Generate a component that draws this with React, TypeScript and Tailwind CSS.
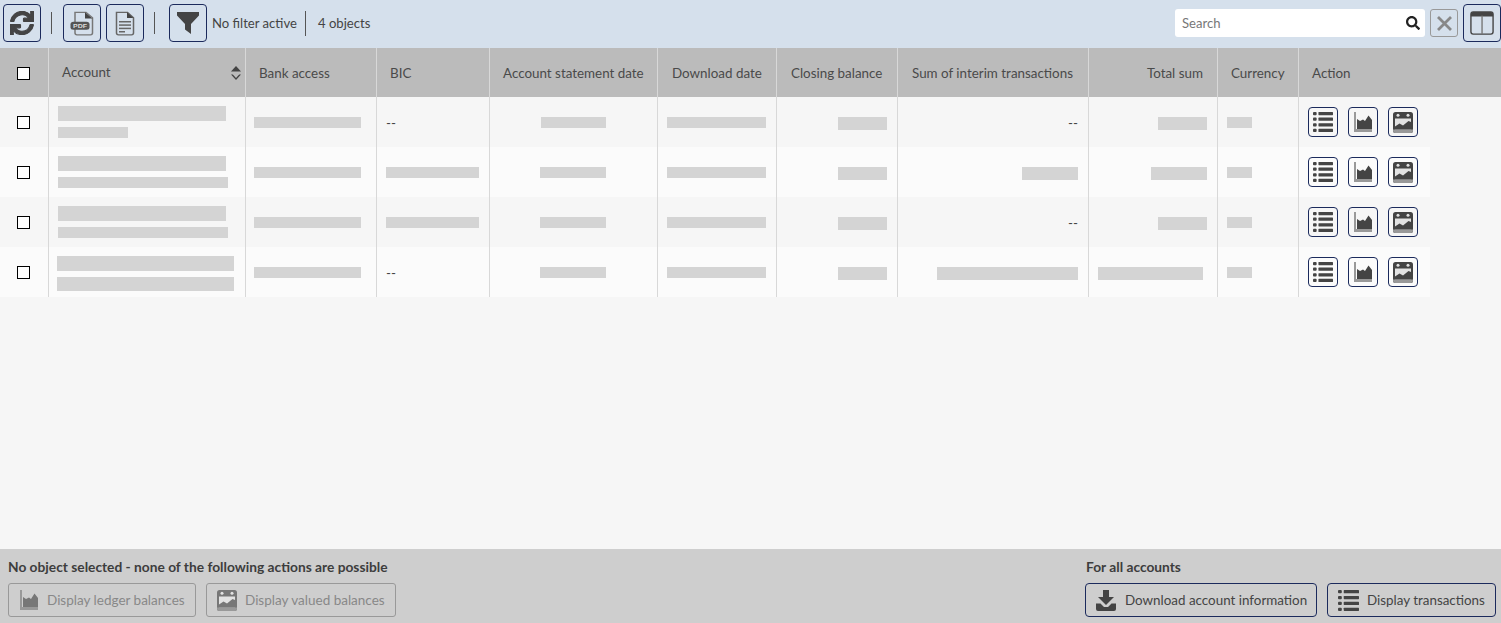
import { FaSearch, FaSync } from "react-icons/fa";

const navyBtn = "flex items-center justify-center rounded-[4px] border border-[#1b2a5c]";

function ListIcon({ size }: { size: number }) {
  return (
    <svg width={size} height={size} viewBox="1 3 22 20" preserveAspectRatio="none" fill="#444">
      <rect x="1" y="3" width="4" height="3.2" rx="1" />
      <rect x="1" y="8.600" width="4" height="3.200" rx="1" />
      <rect x="1" y="14.200" width="4" height="3.200" rx="1" />
      <rect x="1" y="19.800" width="4" height="3.200" rx="1" />
      <rect x="7" y="3" width="16" height="3.200" rx="0.6" />
      <rect x="7" y="8.600" width="16" height="3.200" rx="0.6" />
      <rect x="7" y="14.200" width="16" height="3.200" rx="0.6" />
      <rect x="7" y="19.800" width="16" height="3.200" rx="0.6" />
    </svg>
  );
}

function LedgerIcon({ color = "#444" }: { color?: string }) {
  return (
    <svg width="18" height="20" viewBox="0 0 18 20">
      <path d="M0 0h2v17h16v3H0z" fill="#999" />
      <path d="M3 7l3 2 3-1.500 2 1.500 3.500-5.500L18 8v9H3z" fill={color} />
    </svg>
  );
}

function ValuedIcon({ color = "#444" }: { color?: string }) {
  return (
    <svg width="20" height="21" viewBox="0 0 20 21">
      <rect x="0" y="0" width="20" height="21" rx="2.500" fill={color} />
      <rect x="2" y="6.500" width="16" height="11" fill="#e2e2e2" />
      <circle cx="5" cy="3.300" r="1.500" fill="#e2e2e2" />
      <circle cx="15" cy="3.300" r="1.500" fill="#e2e2e2" />
      <path d="M2 17.500v-3l4.500-3 3.500 2 5.500-4.500 2.500 1v7.500z" fill={color} />
      <path d="M0 17.500h20v1a2.500 2.500 0 0 1-2.500 2.500h-15a2.500 2.500 0 0 1-2.500-2.500z" fill="#999" />
    </svg>
  );
}

function PdfIcon() {
  return (
    <svg width="24" height="25" viewBox="0 0 24 30" preserveAspectRatio="none">
      <path d="M5 1.500h11l6.500 6.500v18.500a2 2 0 0 1-2 2H7a2 2 0 0 1-2-2z" fill="none" stroke="#777" strokeWidth="1.500" />
      <path d="M15 1.500v7.500h7.500z" fill="#444" />
      <rect x="0.500" y="13" width="19" height="9.500" rx="3" fill="#555" />
      <text x="10" y="20.500" textAnchor="middle" fontSize="7" fontWeight="700" fill="#ddd" fontFamily="Liberation Sans, sans-serif">PDF</text>
    </svg>
  );
}

function DocIcon() {
  return (
    <svg width="20" height="25" viewBox="0 0 20 30" preserveAspectRatio="none">
      <path d="M1.500 1.500h11l6 6.500v18.500a2 2 0 0 1-2 2h-13a2 2 0 0 1-2-2z" fill="none" stroke="#666" strokeWidth="1.500" />
      <path d="M12 1.500v7h6.500z" fill="#444" />
      <rect x="4" y="12" width="12" height="1.800" fill="#666" />
      <rect x="4" y="16" width="12" height="1.800" fill="#666" />
      <rect x="4" y="20" width="12" height="1.800" fill="#666" />
      <rect x="4" y="24" width="6" height="1.800" fill="#666" />
    </svg>
  );
}

function FilterIcon() {
  return (
    <svg width="22" height="22" viewBox="0 0 22 22" fill="#444">
      <path d="M0 0h22v3.500l-8 8.500v10l-6-4.500v-5.500L0 3.500z" />
    </svg>
  );
}

function CloseIcon() {
  return (
    <svg width="15" height="15" viewBox="0 0 15 15" stroke="#888" strokeWidth="2.800" fill="none">
      <path d="M1 1l13 13M14 1L1 14" />
    </svg>
  );
}

function LayoutIcon() {
  return (
    <svg width="24" height="24" viewBox="0 0 26 26">
      <rect x="1" y="1" width="24" height="24" rx="2.500" fill="none" stroke="#444" strokeWidth="1.500" />
      <path d="M1 3.500a2.500 2.500 0 0 1 2.500-2.500h19a2.500 2.500 0 0 1 2.500 2.500v2.500H1z" fill="#444" />
      <rect x="12.300" y="5" width="1.500" height="20" fill="#777" />
    </svg>
  );
}

function DownloadIcon() {
  return (
    <svg width="20" height="21" viewBox="0 0 20 21" fill="#444">
      <path d="M7 0h6v7h5l-8 8-8-8h5z" />
      <path d="M0 13.500h4.500L8 17h4l3.500-3.500H20V19a2 2 0 0 1-2 2H2a2 2 0 0 1-2-2z" />
    </svg>
  );
}

function Bar({ w, h = 11, className = "" }: { w: number; h?: number; className?: string }) {
  return <div className={`bg-[#d4d4d4] ${className}`} style={{ width: w, height: h }} />;
}

function Cell({ w, className = "", children }: { w: string; className?: string; children: React.ReactNode }) {
  return <div className={`${w} flex h-full shrink-0 items-center border-l border-[#d8d8d8] ${className}`}>{children}</div>;
}

function Checkbox() {
  return <div className="h-[13px] w-[13px] border border-black bg-white" />;
}

function Dash() {
  return <span className="pt-[2px] text-[#444]">--</span>;
}

type Row = {
  acc1: number;
  acc2: number;
  acc2h: number;
  accLeft: string;
  bic: number;
  date: number;
  sum: number;
  total: number;
  totalPad: string;
  bg: string;
};

const rows: Row[] = [
  { acc1: 168, acc2: 70, acc2h: 11, accLeft: "pl-[9px]", bic: 0, date: 65, sum: 0, total: 49, totalPad: "pr-[10px]", bg: "bg-[#f6f6f6]" },
  { acc1: 168, acc2: 170, acc2h: 11, accLeft: "pl-[9px]", bic: 93, date: 66, sum: 56, total: 56, totalPad: "pr-[10px]", bg: "bg-[#fbfbfb]" },
  { acc1: 168, acc2: 170, acc2h: 11, accLeft: "pl-[9px]", bic: 93, date: 66, sum: 0, total: 49, totalPad: "pr-[10px]", bg: "bg-[#f6f6f6]" },
  { acc1: 177, acc2: 177, acc2h: 14, accLeft: "pl-[8px]", bic: 0, date: 66, sum: 141, total: 105, totalPad: "pr-[14px]", bg: "bg-[#fbfbfb]" },
];

const headers = [
  { label: "Bank access", w: "w-[131px]", pad: "pl-[13px]" },
  { label: "BIC", w: "w-[113px]", pad: "pl-[13px]" },
  { label: "Account statement date", w: "w-[168px]", pad: "pl-[13px]" },
  { label: "Download date", w: "w-[119px]", pad: "pl-[14px]" },
  { label: "Closing balance", w: "w-[121px]", pad: "pl-[14px]" },
  { label: "Sum of interim transactions", w: "w-[191px]", pad: "pl-[14px]" },
  { label: "Total sum", w: "w-[129px]", pad: "justify-end pr-[14px]" },
  { label: "Currency", w: "w-[81px]", pad: "pl-[13px]" },
];

export default function App() {
  return (
    <div className="flex h-[623px] w-[1501px] flex-col overflow-hidden bg-[#f6f6f6] font-['Lato',sans-serif] text-[13.4px] text-[#444]">
      {/* toolbar */}
      <div className="flex h-[48px] shrink-0 items-center bg-[#d5e0ec] pb-[2px] pl-[3px] text-[13.1px]">
        <button className={`${navyBtn} h-[38px] w-[38px]`}>
          <FaSync size={24} color="#444" stroke="#444" strokeWidth={24} />
        </button>
        <div className="ml-[10px] mr-[11px] h-[22px] w-px bg-[#555]" />
        <button className={`${navyBtn} h-[38px] w-[38px]`}>
          <PdfIcon />
        </button>
        <button className={`${navyBtn} ml-[5px] h-[38px] w-[38px]`}>
          <DocIcon />
        </button>
        <div className="ml-[10px] mr-[14px] h-[22px] w-px bg-[#555]" />
        <button className={`${navyBtn} h-[38px] w-[38px]`}>
          <FilterIcon />
        </button>
        <span className="ml-[5px] w-[85px] whitespace-nowrap pt-[2px]">No filter active</span>
        <div className="ml-[8px] mr-[12px] h-[25px] w-px bg-[#555]" />
        <span className="pt-[2px]">4 objects</span>
        <div className="ml-auto flex h-[28px] w-[250px] items-center justify-between rounded-[3px] bg-white pl-[7px] pr-[5px] text-[#777]">
          <span className="pt-[2px]">Search</span>
          <FaSearch size={14} color="#222" />
        </div>
        <button className="ml-[5px] flex h-[28px] w-[28px] items-center justify-center rounded-[3px] border border-[#999]">
          <CloseIcon />
        </button>
        <button className={`${navyBtn} ml-[5px] h-[38px] w-[38px]`}>
          <LayoutIcon />
        </button>
      </div>

      {/* table header */}
      <div className="flex h-[49px] shrink-0 items-center bg-[#bbbbbb] text-[#4a4a4a]">
        <div className="flex h-full w-[48px] shrink-0 items-center justify-center pr-[1px] pt-[1px]">
          <Checkbox />
        </div>
        <div className="flex h-full w-[197px] shrink-0 items-center justify-between border-l border-[#d8d8d8] pl-[13px] pr-[3px]">
          <span>Account</span>
          <svg width="12" height="16" viewBox="0 0 12 16" fill="#444">
            <path d="M6 1l5 5.500H1z" />
            <path d="M1 9.500h1.800L6 13l3.200-3.500H11L6 15z" />
          </svg>
        </div>
        {headers.map((h) => (
          <div key={h.label} className={`${h.w} flex h-full shrink-0 items-center border-l border-[#d8d8d8] pt-[2px] ${h.pad}`}>
            {h.label}
          </div>
        ))}
        <div className="flex h-full flex-1 items-center border-l border-[#d8d8d8] pl-[13px] pt-[2px]">Action</div>
      </div>

      {/* rows */}
      <div className="flex w-[1430px] flex-col">
        {rows.map((r, i) => (
          <div key={i} className={`flex h-[50px] items-center ${r.bg}`}>
            <div className="flex h-full w-[48px] shrink-0 items-center justify-center pr-[1px]">
              <Checkbox />
            </div>
            <div className={`flex h-full w-[197px] shrink-0 flex-col gap-[6px] border-l border-[#d8d8d8] pt-[9px] ${r.accLeft}`}>
              <Bar w={r.acc1} h={15} />
              <Bar w={r.acc2} h={r.acc2h} />
            </div>
            <Cell w="w-[131px]" className="pl-[8px]"><Bar w={107} /></Cell>
            <Cell w="w-[113px]" className="pl-[9px]">{r.bic ? <Bar w={r.bic} /> : <Dash />}</Cell>
            <Cell w="w-[168px]" className="justify-center pr-[1px]"><Bar w={r.date} /></Cell>
            <Cell w="w-[119px]" className="justify-center pr-[1px]"><Bar w={99} /></Cell>
            <Cell w="w-[121px]" className="justify-end pr-[10px]"><Bar w={49} h={13} className="mt-[3px]" /></Cell>
            <Cell w="w-[191px]" className="justify-end pr-[10px]">{r.sum ? <Bar w={r.sum} h={13} className="mt-[3px]" /> : <Dash />}</Cell>
            <Cell w="w-[129px]" className={`justify-end ${r.totalPad}`}><Bar w={r.total} h={13} className="mt-[3px]" /></Cell>
            <Cell w="w-[81px]" className="pl-[9px]"><Bar w={25} /></Cell>
            <div className="flex h-full flex-1 items-center gap-[10px] border-l border-[#d8d8d8] pl-[9px]">
              <button className={`${navyBtn} h-[30px] w-[30px]`}><ListIcon size={20} /></button>
              <button className={`${navyBtn} h-[30px] w-[30px]`}><LedgerIcon /></button>
              <button className={`${navyBtn} h-[30px] w-[30px]`}><ValuedIcon /></button>
            </div>
          </div>
        ))}
      </div>

      {/* footer */}
      <div className="mt-auto flex h-[74px] shrink-0 justify-between bg-[#cecece] pb-[6px] pl-[8px] pr-[5px] pt-[8px]">
        <div className="flex flex-col justify-between">
          <div className="text-[13.75px] font-bold text-[#3d3d3d]">No object selected - none of the following actions are possible</div>
          <div className="flex gap-[10px] text-[13.5px] text-[#888]">
            <button className="flex h-[34px] w-[188px] items-center gap-[9px] rounded-[3px] border border-[#999] pl-[11px]">
              <LedgerIcon color="#777" />
              Display ledger balances
            </button>
            <button className="flex h-[34px] w-[190px] items-center gap-[8px] rounded-[3px] border border-[#999] pl-[10px]">
              <ValuedIcon color="#777" />
              Display valued balances
            </button>
          </div>
        </div>
        <div className="flex flex-col justify-between">
          <div className="pl-[1px] text-[13.75px] font-bold text-[#3d3d3d]">For all accounts</div>
          <div className="flex gap-[10px]">
            <button className={`${navyBtn} h-[34px] w-[232px] justify-start gap-[9px] pl-[10px]`}>
              <DownloadIcon />
              Download account information
            </button>
            <button className={`${navyBtn} h-[34px] w-[169px] justify-start gap-[8px] pl-[10px]`}>
              <ListIcon size={21} />
              Display transactions
            </button>
          </div>
        </div>
      </div>
    </div>
  );
}
